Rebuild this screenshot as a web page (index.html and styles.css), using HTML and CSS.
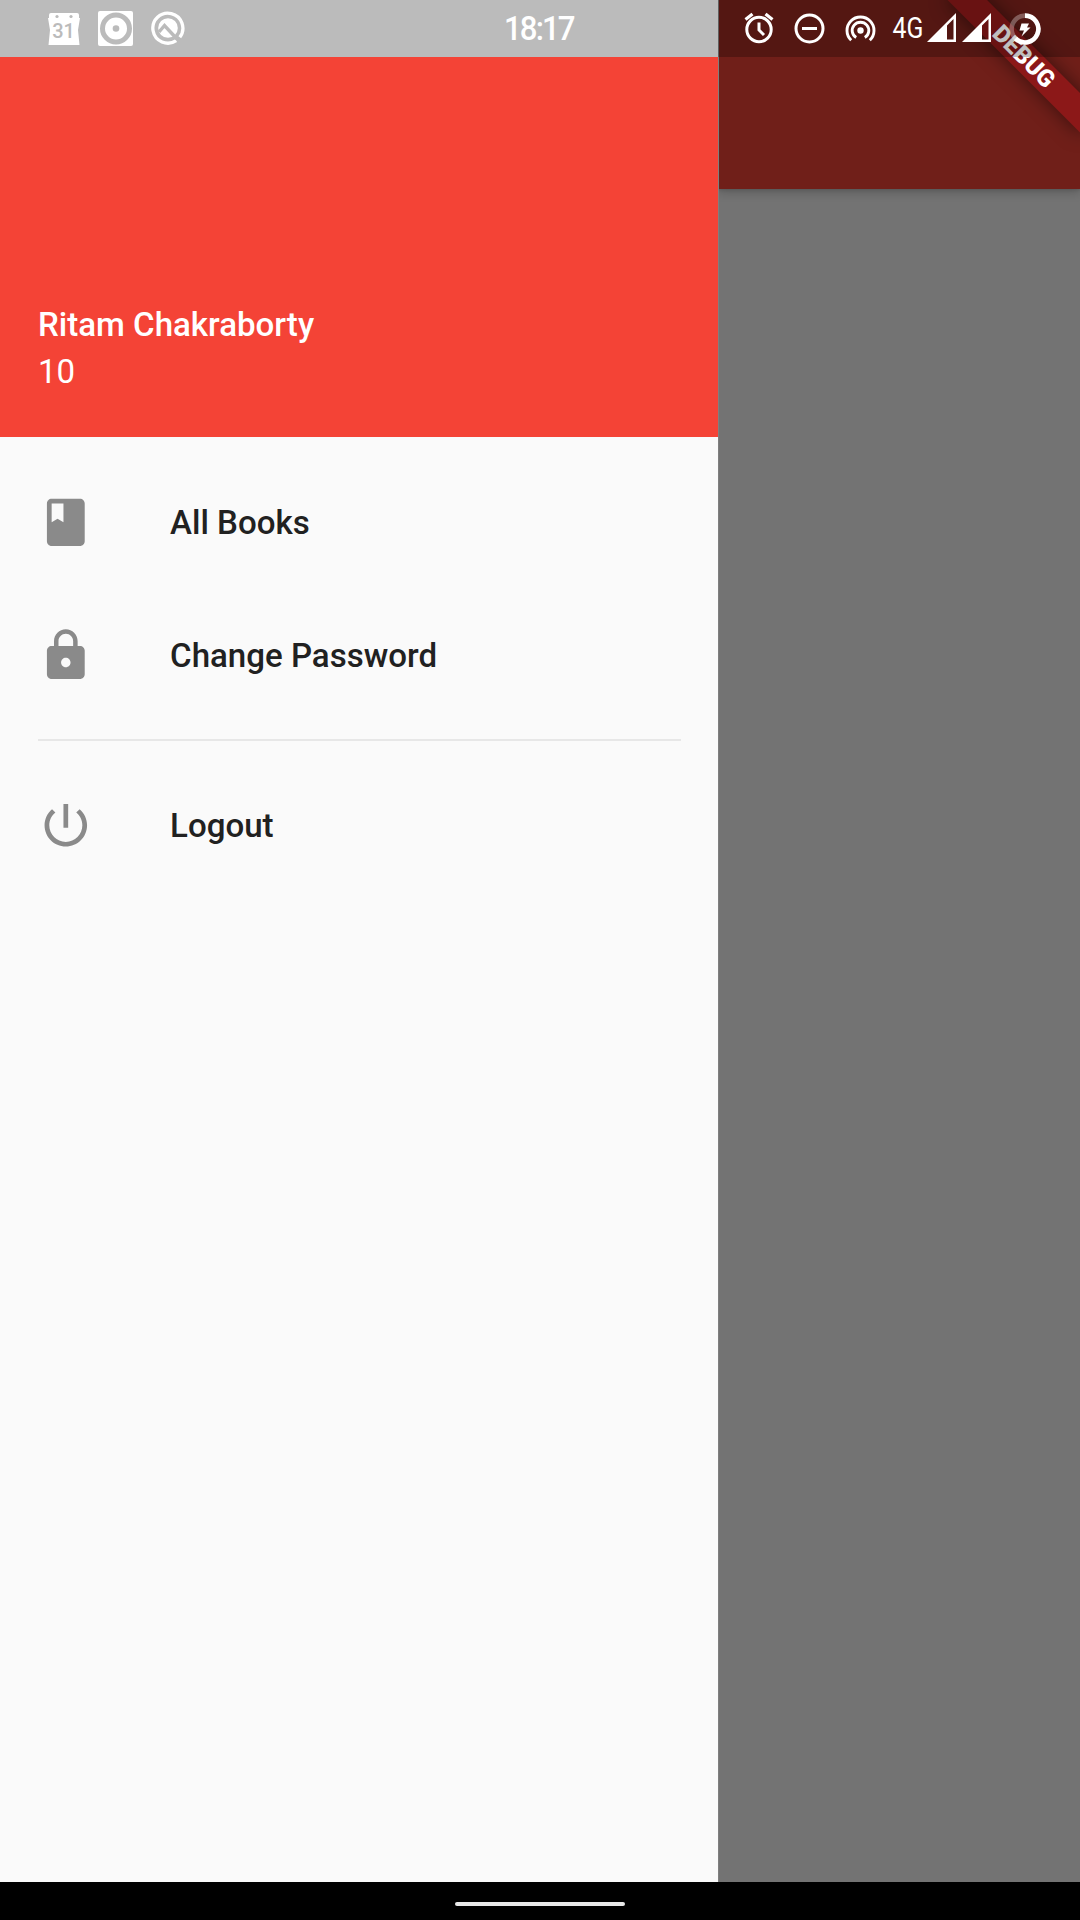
FILE: index.html
```html
<!DOCTYPE html>
<html lang="en">
<head>
<meta charset="utf-8">
<title>All Books</title>
<link rel="stylesheet" href="styles.css">
</head>
<body>
<div class="screen">
  <div class="content">
    <aside class="drawer">
      <header class="account">
        <div class="name">Ritam Chakraborty</div>
        <div class="count">10</div>
      </header>
      <nav class="menu">
        <a class="item">
          <svg class="icon" viewBox="-0.200 0 24 24"><path d="M18 2H6c-1.100 0-2 .9-2 2v16c0 1.100.9 2 2 2h12c1.100 0 2-.9 2-2V4c0-1.100-.9-2-2-2zM6 4h5v8l-2.500-1.500L6 12V4z"/></svg>
          <span>All Books</span>
        </a>
        <a class="item">
          <svg class="icon" viewBox="-0.200 0 24 24"><path d="M18 8h-1V6c0-2.760-2.240-5-5-5S7 3.240 7 6v2H6c-1.100 0-2 .9-2 2v10c0 1.100.9 2 2 2h12c1.100 0 2-.9 2-2V10c0-1.100-.9-2-2-2zm-6 9c-1.100 0-2-.9-2-2s.9-2 2-2 2 .9 2 2-.9 2-2 2zm3.100-9H8.900V6c0-1.710 1.390-3.100 3.100-3.100s3.100 1.390 3.100 3.100v2z"/></svg>
          <span>Change Password</span>
        </a>
        <hr class="divider">
        <a class="item">
          <svg class="icon" viewBox="-0.200 0 24 24"><path d="M13 3h-2v10h2V3zm4.830 2.170l-1.420 1.420C17.990 7.860 19 9.810 19 12c0 3.870-3.130 7-7 7s-7-3.130-7-7c0-2.190 1.010-4.140 2.580-5.420L6.170 5.170C4.230 6.820 3 9.260 3 12c0 4.970 4.030 9 9 9s9-4.030 9-9c0-2.740-1.230-5.180-3.170-6.830z"/></svg>
          <span>Logout</span>
        </a>
      </nav>
    </aside>
    <main class="page">
      <div class="appbar"></div>
    </main>
    <div class="banner">DEBUG</div>
  </div>
  <div class="statusbar">
    <svg class="s-calendar" width="32" height="33" viewBox="0 0 32 33">
      <path fill="#fff" d="M3 1Q1 1 1 3V6H0L2 18 0.500 33H31.500L30 18 32 6H31V3Q31 1 29 1Z"/>
      <circle cx="9" cy="4.500" r="1.600" fill="#bbb"/><circle cx="23" cy="4.500" r="1.600" fill="#bbb"/>
      <text class="day" x="15.500" y="26.300" text-anchor="middle">31</text>
    </svg>
    <svg class="s-target" width="35" height="35" viewBox="0 0 35 35">
      <rect width="35" height="35" rx="2" fill="#fff"/>
      <circle cx="18" cy="17.500" r="13.500" fill="none" stroke="#bbb" stroke-width="5"/>
      <circle cx="18" cy="17.500" r="3.300" fill="#bbb"/>
    </svg>
    <svg class="s-q" width="34" height="34" viewBox="0 0 34 34" fill="none">
      <path d="M28.800 26.200A15 15 0 1 0 25.200 29.600" stroke="#fff" stroke-width="3.300"/>
      <circle cx="17" cy="17" r="9.800" fill="#fff"/>
      <path d="M8 21L13.500 14.500 26 28" stroke="#bbb" stroke-width="3.400"/>
    </svg>
    <span class="clock">18:17</span>
    <svg class="s-alarm" width="30" height="32" viewBox="0 0 30 32" fill="none" stroke="#fff">
      <circle cx="15" cy="17.500" r="12.200" stroke-width="3"/>
      <path d="M15 10.500V18l5 5" stroke-width="3"/>
      <path d="M1.500 7.500L8.500 2M28.500 7.500L21.500 2" stroke-width="3.200"/>
    </svg>
    <svg class="s-dnd" width="31" height="31" viewBox="0 0 31 31" fill="none" stroke="#fff" stroke-width="3">
      <circle cx="15.500" cy="15.500" r="13.500"/><path d="M8 15.500H23"/>
    </svg>
    <svg class="s-hotspot" width="31" height="31" viewBox="0 0 31 31" fill="none" stroke="#fff" stroke-width="2.900">
      <circle cx="15.500" cy="17.500" r="3.200" fill="#fff" stroke="none"/>
      <path d="M11.200 24.600A8.300 8.300 0 1 1 19.800 24.600M6.200 27.300A13.500 13.500 0 1 1 24.800 27.300"/>
    </svg>
    <span class="network">4G</span>
    <svg class="s-signal" width="29" height="29" viewBox="0 0 29 29"><path fill="#fff" fill-rule="evenodd" d="M29 0V29H0ZM20 12.500V26.500H26.500V6Z"/></svg>
    <svg class="s-signal second" width="29" height="29" viewBox="0 0 29 29"><path fill="#fff" fill-rule="evenodd" d="M29 0V29H0ZM20 12.500V26.500H26.500V6Z"/></svg>
    <svg class="s-battery" width="32" height="32" viewBox="0 0 32 32" fill="none" stroke-width="4.600">
      <circle cx="16" cy="16" r="13.400" stroke="#fff" stroke-opacity=".3"/>
      <path d="M16 2.600A13.400 13.400 0 1 1 6.500 25.500" stroke="#fff"/>
      <path fill="#fff" d="M12.500 10.500H20L18 14.500H21.500L12.500 23.500 15 17.500H10.500Z"/>
    </svg>
  </div>
  <footer class="navbar"><div class="pill"></div></footer>
</div>
</body>
</html>
```
FILE: styles.css
```css
* { box-sizing: border-box; }
body { margin: 0; font-family: Roboto, "Noto Sans", sans-serif; }
.screen {
  position: relative;
  display: flex;
  flex-direction: column;
  width: 1080px;
  height: 1920px;
  overflow: hidden;
}
.content {
  position: relative;
  display: flex;
  flex: 1;
  overflow: hidden;
}
.drawer { width: 718px; padding-top: 57px; background: #fafafa; }
.account {
  height: 380px;
  padding: 248px 38px 0;
  background: #f44336;
  color: #fff;
  font-size: 33.075px;
  line-height: 39px;
}
.name { font-weight: 500; }
.count { margin-top: 8px; }
.menu { padding-top: 19px; }
.item {
  display: flex;
  align-items: center;
  height: 133px;
  padding-left: 37.400px;
  gap: 76px;
  color: #212121;
  font-size: 33.075px;
  font-weight: 500;
}
.icon { width: 56.700px; height: 56.700px; fill: #8a8a8a; }
.divider {
  height: 2px;
  margin: 17px 37px 18px 38px;
  border: 0;
  background: #e7e7e7;
}
.page { flex: 1; background: #737373; border-left: 1px solid #7f7f7f; overflow: hidden; }
.appbar {
  height: 189px;
  margin-left: -1px;
  background: #701f19;
  box-shadow: 0 4px 9px rgba(0, 0, 0, .18), 0 1px 3px rgba(0, 0, 0, .12);
}
/* Corner ribbon, rotated about the top right corner of the window */
.banner {
  position: absolute;
  top: 66.150px;
  left: 985.500px;
  width: 189px;
  height: 28.350px;
  background: #8c1818;
  box-shadow: 0 0 19px rgba(0, 0, 0, .5);
  color: #fff;
  font-size: 24.100px;
  font-weight: 900;
  line-height: 28.350px;
  text-align: center;
  transform: rotate(45deg);
  transform-origin: 94.500px -66.150px;
}
.statusbar {
  position: absolute;
  inset: 0 0 auto 0;
  display: flex;
  align-items: flex-start;
  height: 57px;
  padding-left: 48px;
  background: rgba(0, 0, 0, .25);
  color: #fff;
}
.statusbar svg { flex: none; }
.day { fill: #bbb; font-size: 20px; font-weight: 500; }
.s-calendar { margin-top: 12px; }
.s-target { margin: 11px 0 0 18px; }
.s-q { margin: 11px 0 0 18px; }
.clock {
  width: 86px;
  margin: 9px 0 0 319px;
  font-size: 33px;
  font-weight: 500;
  letter-spacing: -2px;
  line-height: 39px;
  transform: scaleX(.945);
  transform-origin: 0 0;
}
.s-alarm { margin: 12px 0 0 154px; }
.s-dnd { margin: 13px 0 0 20px; }
.s-hotspot { margin: 13px 0 0 20px; }
.network {
  width: 34px;
  margin: 11px 0 0 16px;
  font-size: 29.500px;
  line-height: 34px;
  transform: translateX(.5px) scaleX(.84);
  transform-origin: 0 0;
}
.s-signal { margin: 13px 0 0 1px; }
.s-signal.second { margin-left: 6px; }
.s-battery { margin: 13px 0 0 18px; }
.navbar {
  display: flex;
  justify-content: center;
  height: 38px;
  padding-top: 20px;
  background: #000;
}
.pill { width: 170px; height: 4px; border-radius: 2px; background: #e8e8e8; }
```
